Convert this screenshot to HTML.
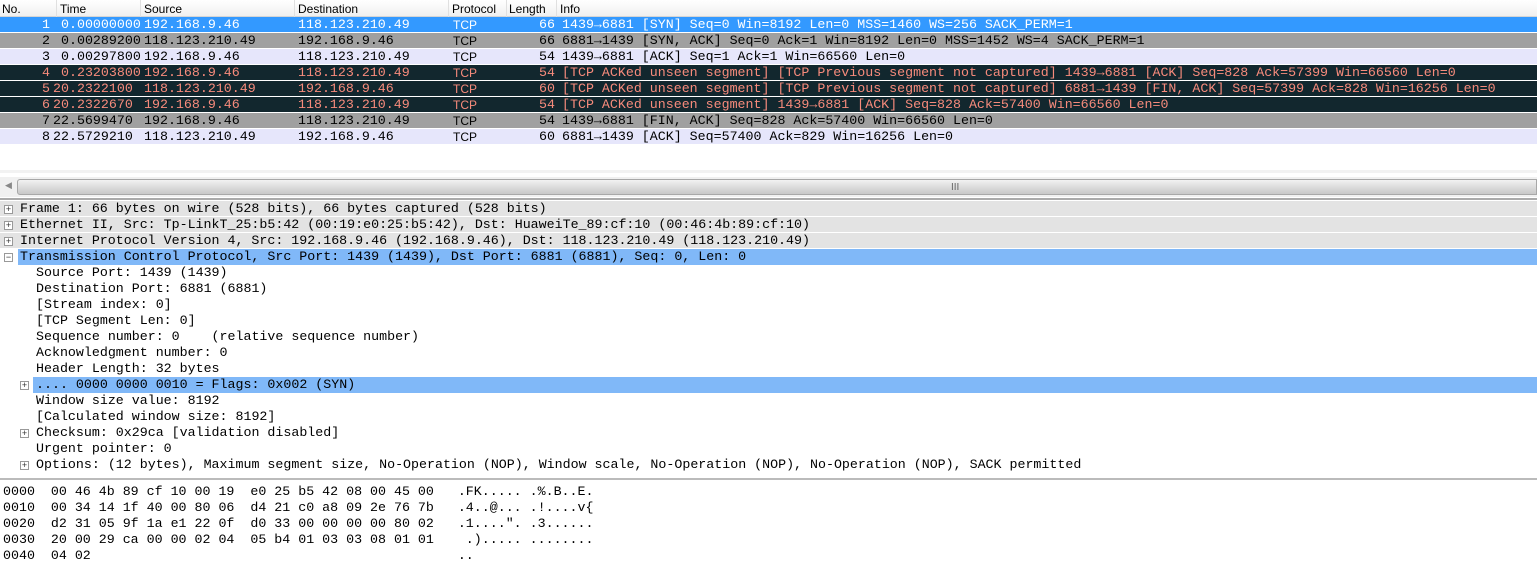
<!DOCTYPE html>
<html><head><meta charset="utf-8"><style>
*{margin:0;padding:0;box-sizing:border-box}
body{width:1537px;height:576px;overflow:hidden;background:#fff;font-family:"Liberation Mono",monospace;font-size:13.3px;color:#000;position:relative}
.hdr{position:absolute;top:0;left:0;width:1537px;height:17px;background:linear-gradient(#fff,#f0f0f0);border-bottom:1px solid #d5d5d5;font-family:"Liberation Sans",sans-serif;font-size:12px}
.hdr span{position:absolute;top:2px}
.hdr i{position:absolute;top:0;height:17px;border-left:1px solid #e0e0e0}
.r{position:absolute;left:0;width:1537px;height:16px;line-height:16px;white-space:pre;border-bottom:1px solid #fff}
.r span{position:absolute;top:0}
.sel{background:#3399ff;color:#fff}
.gr{background:#a0a0a0}
.lv{background:#e6e6fb}
.dk{background:#12272e;color:#f78b7c}
.proto{font-family:"Liberation Sans",sans-serif;font-size:12px}
.sb{position:absolute;top:177px;left:0;width:1537px;height:20px;background:#f0f0f0}
.th{position:absolute;top:2px;left:17px;right:0;height:16px;background:linear-gradient(#f2f2f2,#d8d8d8 60%,#c8c8c8);border:1px solid #a8a8a8;border-radius:3px 0 0 3px}
.d{position:absolute;left:0;width:1537px;height:16px;line-height:16px;white-space:pre}
.g{background:#e3e3e3;border-bottom:1px solid #fff}
.b{background:#80b8f8}
.pm{position:absolute;top:4px;width:9px;height:9px;border:1px solid #999;background:#fff;font-size:9px;line-height:7px;text-align:center;color:#333;font-family:"Liberation Sans",sans-serif}
.hx{position:absolute;left:3px;white-space:pre;line-height:16px}
</style></head><body>
<div class="hdr">
<span style="left:2px">No.</span><i style="left:56px"></i>
<span style="left:60px">Time</span><i style="left:140px"></i>
<span style="left:144px">Source</span><i style="left:294px"></i>
<span style="left:298px">Destination</span><i style="left:448px"></i>
<span style="left:452px">Protocol</span><i style="left:506px"></i>
<span style="left:509px">Length</span><i style="left:556px"></i>
<span style="left:560px">Info</span>
</div>
<div class="r sel" style="top:17px"><span style="left:42px">1</span><span style="left:61px">0.00000000</span><span style="left:144px">192.168.9.46</span><span style="left:298px">118.123.210.49</span><span class="proto" style="left:453px">TCP</span><span style="left:539px">66</span><span style="left:562px">1439→6881 [SYN] Seq=0 Win=8192 Len=0 MSS=1460 WS=256 SACK_PERM=1</span></div>
<div class="r gr" style="top:33px"><span style="left:42px">2</span><span style="left:61px">0.00289200</span><span style="left:144px">118.123.210.49</span><span style="left:298px">192.168.9.46</span><span class="proto" style="left:453px">TCP</span><span style="left:539px">66</span><span style="left:562px">6881→1439 [SYN, ACK] Seq=0 Ack=1 Win=8192 Len=0 MSS=1452 WS=4 SACK_PERM=1</span></div>
<div class="r lv" style="top:49px"><span style="left:42px">3</span><span style="left:61px">0.00297800</span><span style="left:144px">192.168.9.46</span><span style="left:298px">118.123.210.49</span><span class="proto" style="left:453px">TCP</span><span style="left:539px">54</span><span style="left:562px">1439→6881 [ACK] Seq=1 Ack=1 Win=66560 Len=0</span></div>
<div class="r dk" style="top:65px"><span style="left:42px">4</span><span style="left:61px">0.23203800</span><span style="left:144px">192.168.9.46</span><span style="left:298px">118.123.210.49</span><span class="proto" style="left:453px">TCP</span><span style="left:539px">54</span><span style="left:562px">[TCP ACKed unseen segment] [TCP Previous segment not captured] 1439→6881 [ACK] Seq=828 Ack=57399 Win=66560 Len=0</span></div>
<div class="r dk" style="top:81px"><span style="left:42px">5</span><span style="left:53px">20.2322100</span><span style="left:144px">118.123.210.49</span><span style="left:298px">192.168.9.46</span><span class="proto" style="left:453px">TCP</span><span style="left:539px">60</span><span style="left:562px">[TCP ACKed unseen segment] [TCP Previous segment not captured] 6881→1439 [FIN, ACK] Seq=57399 Ack=828 Win=16256 Len=0</span></div>
<div class="r dk" style="top:97px"><span style="left:42px">6</span><span style="left:53px">20.2322670</span><span style="left:144px">192.168.9.46</span><span style="left:298px">118.123.210.49</span><span class="proto" style="left:453px">TCP</span><span style="left:539px">54</span><span style="left:562px">[TCP ACKed unseen segment] 1439→6881 [ACK] Seq=828 Ack=57400 Win=66560 Len=0</span></div>
<div class="r gr" style="top:113px"><span style="left:42px">7</span><span style="left:53px">22.5699470</span><span style="left:144px">192.168.9.46</span><span style="left:298px">118.123.210.49</span><span class="proto" style="left:453px">TCP</span><span style="left:539px">54</span><span style="left:562px">1439→6881 [FIN, ACK] Seq=828 Ack=57400 Win=66560 Len=0</span></div>
<div class="r lv" style="top:129px"><span style="left:42px">8</span><span style="left:53px">22.5729210</span><span style="left:144px">118.123.210.49</span><span style="left:298px">192.168.9.46</span><span class="proto" style="left:453px">TCP</span><span style="left:539px">60</span><span style="left:562px">6881→1439 [ACK] Seq=57400 Ack=829 Win=16256 Len=0</span></div>

<div style="position:absolute;top:170px;left:0;width:1537px;height:3px;background:#f2f2f2"></div>
<div class="sb"><span style="position:absolute;left:5px;top:3px;font-size:9px;color:#888;font-family:'Liberation Sans',sans-serif">◀</span><div class="th"><span style="position:absolute;left:933px;top:2px;font-size:10px;color:#666;font-family:'Liberation Sans',sans-serif">III</span></div></div>
<div style="position:absolute;top:198px;left:0;width:1537px;height:2px;background:#aaa"></div>

<div class="d g" style="top:201px"><span class="pm" style="left:4px">+</span><span style="position:absolute;left:20px">Frame 1: 66 bytes on wire (528 bits), 66 bytes captured (528 bits)</span></div>
<div class="d g" style="top:217px"><span class="pm" style="left:4px">+</span><span style="position:absolute;left:20px">Ethernet II, Src: Tp-LinkT_25:b5:42 (00:19:e0:25:b5:42), Dst: HuaweiTe_89:cf:10 (00:46:4b:89:cf:10)</span></div>
<div class="d g" style="top:233px"><span class="pm" style="left:4px">+</span><span style="position:absolute;left:20px">Internet Protocol Version 4, Src: 192.168.9.46 (192.168.9.46), Dst: 118.123.210.49 (118.123.210.49)</span></div>
<div class="d" style="top:249px"><span class="pm" style="left:4px">−</span><span class="b" style="position:absolute;left:18px;right:0;padding-left:2px">Transmission Control Protocol, Src Port: 1439 (1439), Dst Port: 6881 (6881), Seq: 0, Len: 0</span></div>
<div class="d" style="top:265px;left:36px">Source Port: 1439 (1439)</div>
<div class="d" style="top:281px;left:36px">Destination Port: 6881 (6881)</div>
<div class="d" style="top:297px;left:36px">[Stream index: 0]</div>
<div class="d" style="top:313px;left:36px">[TCP Segment Len: 0]</div>
<div class="d" style="top:329px;left:36px">Sequence number: 0    (relative sequence number)</div>
<div class="d" style="top:345px;left:36px">Acknowledgment number: 0</div>
<div class="d" style="top:361px;left:36px">Header Length: 32 bytes</div>
<div class="d" style="top:377px"><span class="pm" style="left:20px">+</span><span class="b" style="position:absolute;left:33px;right:0;padding-left:3px">.... 0000 0000 0010 = Flags: 0x002 (SYN)</span></div>
<div class="d" style="top:393px;left:36px">Window size value: 8192</div>
<div class="d" style="top:409px;left:36px">[Calculated window size: 8192]</div>
<div class="d" style="top:425px"><span class="pm" style="left:20px">+</span><span style="position:absolute;left:36px">Checksum: 0x29ca [validation disabled]</span></div>
<div class="d" style="top:441px;left:36px">Urgent pointer: 0</div>
<div class="d" style="top:457px"><span class="pm" style="left:20px">+</span><span style="position:absolute;left:36px">Options: (12 bytes), Maximum segment size, No-Operation (NOP), Window scale, No-Operation (NOP), No-Operation (NOP), SACK permitted</span></div>

<div style="position:absolute;top:478px;left:0;width:1537px;height:2px;background:#bbb"></div>
<div class="hx" style="top:484px">0000  00 46 4b 89 cf 10 00 19  e0 25 b5 42 08 00 45 00   .FK..... .%.B..E.
0010  00 34 14 1f 40 00 80 06  d4 21 c0 a8 09 2e 76 7b   .4..@... .!....v{
0020  d2 31 05 9f 1a e1 22 0f  d0 33 00 00 00 00 80 02   .1....". .3......
0030  20 00 29 ca 00 00 02 04  05 b4 01 03 03 08 01 01    .)..... ........
0040  04 02                                              ..</div>
</body></html>
